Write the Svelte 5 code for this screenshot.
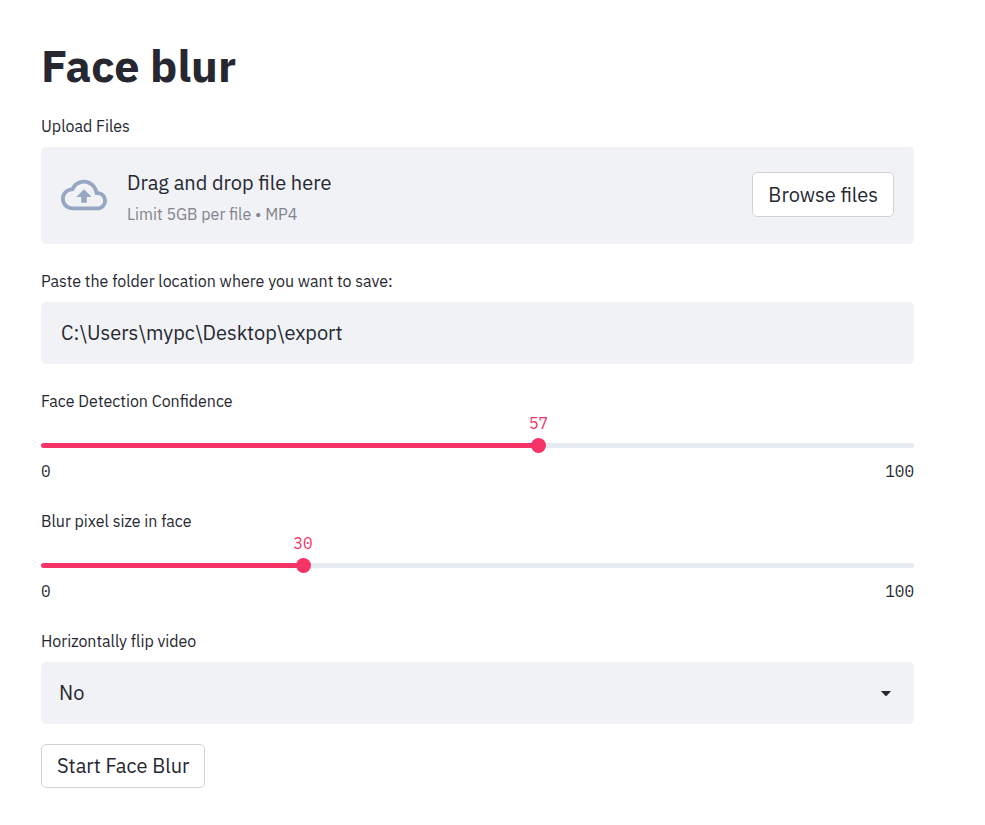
<script>
  let folder = $state('C:\\Users\\mypc\\Desktop\\export');
  let flip = $state('No');
  let sliders = $state([
    { id: 'confidence', label: 'Face Detection Confidence', value: 57 },
    { id: 'blur', label: 'Blur pixel size in face', value: 30 }
  ]);
  let picker;
</script>

<main>
  <h1>Face blur</h1>

  <section class="field">
    <label for="upload">Upload Files</label>
    <div class="dropzone">
      <svg class="cloud" viewBox="0 0 24 24" aria-hidden="true">
        <path d="M19.35 10.04C18.67 6.59 15.64 4 12 4 9.11 4 6.6 5.64 5.35 8.04 2.34 8.36 0 10.91 0 14c0 3.31 2.69 6 6 6h13c2.76 0 5-2.24 5-5 0-2.64-2.05-4.78-4.65-4.96zM19 18H6c-2.21 0-4-1.79-4-4 0-2.05 1.53-3.76 3.56-3.97l1.07-.11.5-.95C8.08 7.14 9.94 6 12 6c2.62 0 4.88 1.86 5.39 4.43l.3 1.5 1.53.11c1.56.1 2.78 1.41 2.78 2.96 0 1.65-1.35 3-3 3zM8 13h2.55v3h2.9v-3H16l-4-4z" />
      </svg>
      <div class="hint">
        <span class="lead">Drag and drop file here</span>
        <span class="limit">Limit 5GB per file • MP4</span>
      </div>
      <input id="upload" type="file" accept="video/mp4" hidden bind:this={picker} />
      <button type="button" onclick={() => picker.click()}>Browse files</button>
    </div>
  </section>

  <section class="field">
    <label for="folder">Paste the folder location where you want to save:</label>
    <input id="folder" class="box" type="text" bind:value={folder} />
  </section>

  {#each sliders as s (s.id)}
    <section class="field">
      <label class="tight" for={s.id}>{s.label}</label>
      <div class="slider" style="--at: {s.value}%">
        <div class="rail"><output for={s.id}>{s.value}</output></div>
        <div class="track">
          <input id={s.id} type="range" min="0" max="100" bind:value={s.value} />
        </div>
        <div class="ticks"><span>0</span><span>100</span></div>
      </div>
    </section>
  {/each}

  <section class="field last">
    <label for="flip">Horizontally flip video</label>
    <div class="select">
      <select id="flip" class="box" bind:value={flip}>
        <option>No</option>
        <option>Yes</option>
      </select>
      <svg class="caret" viewBox="0 0 10 5" aria-hidden="true"><path d="M0 0h10L6 4.500Q5 5.300 4 4.500z" /></svg>
    </div>
  </section>

  <button type="button">Start Face Blur</button>
</main>

<style>
  :global(body) {
    margin: 0;
    background: #fff;
  }
  main {
    padding: 36px 71px 37px 41px;
    color: #262730;
    font-family: 'IBM Plex Sans', Roboto, 'Noto Sans', sans-serif;
    font-size: 20px;
    font-weight: 400;
  }
  h1 {
    margin: 0 0 21px;
    font-size: 45px;
    line-height: 58px;
    font-weight: 700;
  }
  .field {
    margin-bottom: 26px;
  }
  .last {
    margin-bottom: 20px;
  }
  label {
    display: block;
    margin-bottom: 10px;
    font-size: 16px;
    line-height: 22px;
  }
  .tight {
    margin-bottom: 2px;
  }
  .dropzone {
    display: flex;
    align-items: center;
    box-sizing: border-box;
    min-height: 97px;
    padding: 15px 20px 17px;
    background: #f0f2f6;
    border-radius: 5px;
  }
  .dropzone button {
    height: 45px;
    padding-bottom: 1px;
  }
  .cloud {
    flex: none;
    width: 46px;
    height: 46px;
    margin-right: 20px;
    fill: #97a6c3;
  }
  .hint {
    display: flex;
    flex: 1;
    flex-direction: column;
    padding-top: 2px;
  }
  .lead {
    line-height: 36px;
  }
  .limit {
    color: #82838b;
    font-size: 16px;
    line-height: 26px;
  }
  button {
    box-sizing: border-box;
    height: 44px;
    padding: 0 15px 2px;
    border: 1px solid #d2d3d8;
    border-radius: 5px;
    background: #fff;
    color: inherit;
    font: inherit;
    cursor: pointer;
  }
  .box {
    display: block;
    box-sizing: border-box;
    width: 100%;
    height: 62px;
    margin: 0;
    padding: 0 20px 2px;
    border: 0;
    border-radius: 5px;
    background: #f0f2f6;
    color: inherit;
    font: inherit;
    appearance: none;
  }
  .select {
    position: relative;
  }
  select.box {
    padding: 0 18px 2px;
  }
  .caret {
    position: absolute;
    top: 29px;
    right: 23px;
    width: 10px;
    height: 5px;
    fill: #262730;
    pointer-events: none;
  }
  .slider {
    font-family: 'IBM Plex Mono', 'Liberation Mono', monospace;
    font-size: 16px;
    line-height: 18px;
  }
  .rail {
    height: 20px;
    padding-left: var(--at);
  }
  output {
    display: block;
    width: 40px;
    margin-left: -20px;
    color: #f63366;
    text-align: center;
  }
  .track {
    height: 5px;
    margin: 9px 0 14px;
    border-radius: 3px;
    background: linear-gradient(to right, #f63366 var(--at), #e6eaf1 var(--at));
  }
  /* The input overhangs the track so that the thumb's centre reaches both ends. */
  input[type='range'] {
    display: block;
    width: calc(100% + 14px);
    height: 5px;
    margin: 0 -7px;
    background: none;
    appearance: none;
  }
  input[type='range']::-webkit-slider-thumb {
    width: 15px;
    height: 15px;
    border-radius: 50%;
    background: #f63366;
    appearance: none;
  }
  .ticks {
    display: flex;
    justify-content: space-between;
    height: 22px;
  }
</style>
